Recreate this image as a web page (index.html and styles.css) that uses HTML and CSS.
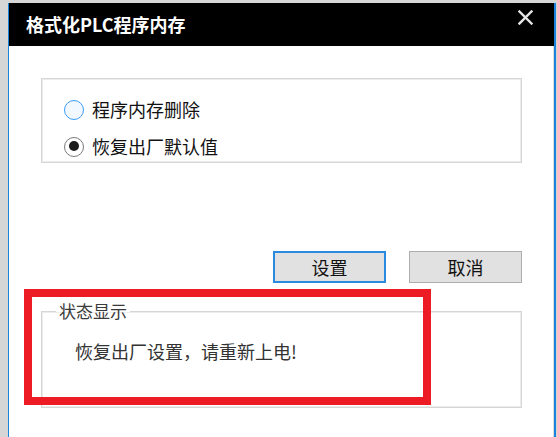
FILE: index.html
```html
<!DOCTYPE html>
<html lang="zh-CN">
<head>
<meta charset="utf-8">
<title>格式化PLC程序内存</title>
<link rel="stylesheet" href="styles.css">
</head>
<body>
<div class="window">
  <div class="titlebar">
    <span class="title">格式化PLC程序内存</span>
    <svg class="close" width="15" height="15" viewBox="0 0 15 15"><path d="M1.5 1.5 L13.5 13.5 M13.5 1.5 L1.5 13.5" stroke="#e6e6e6" stroke-width="2.4" stroke-linecap="square"/></svg>
  </div>
  <div class="content">
    <div class="group options">
      <label class="radio-row"><span class="radio hover"></span><span>程序内存删除</span></label>
      <label class="radio-row"><span class="radio checked"></span><span>恢复出厂默认值</span></label>
    </div>
    <div class="buttons">
      <button class="btn primary">设置</button>
      <button class="btn">取消</button>
    </div>
    <fieldset class="group status">
      <legend>状态显示</legend>
      <div class="status-text">恢复出厂设置，请重新上电!</div>
    </fieldset>
    <div class="highlight"></div>
  </div>
</div>
</body>
</html>
```

FILE: styles.css
```css
* { box-sizing: border-box; }
html, body {
  margin: 0;
  padding: 0;
  background: #d6d6d6;
  width: 557px;
  height: 437px;
  overflow: hidden;
  font-family: "Noto Sans CJK SC", "Microsoft YaHei", sans-serif;
}
.window {
  margin: 3px 0 0 8px;
  width: 548px;
  height: 434px;
  border-left: 1px solid #1a84dc;
  border-right: 2px solid #1a84dc;
  background: #fff;
  display: flex;
  flex-direction: column;
}
.titlebar {
  height: 43px;
  background: #000;
  display: flex;
  align-items: center;
  justify-content: space-between;
  padding: 0 21px 2px 17px;
  flex: none;
}
.title {
  color: #fff;
  font-weight: bold;
  font-size: 18px;
  line-height: 20px;
}
.close { display: block; margin-top: -12px; }
.content {
  position: relative;
  flex: 1;
  border-right: 1px solid #dcdcdc;
  padding: 32px 31px 0 32px;
  display: flex;
  flex-direction: column;
}
.group {
  border: 1px solid #d6d6d6;
  box-shadow: inset 0 0 0 1px #ececec;
}
.options {
  height: 85px;
  padding: 20px 0 0 22px;
  display: flex;
  flex-direction: column;
  gap: 16px;
}
.radio-row {
  display: flex;
  align-items: center;
  gap: 8px;
  font-size: 18px;
  line-height: 21px;
  color: #111;
}
.radio {
  width: 20px;
  height: 20px;
  border-radius: 50%;
  flex: none;
  position: relative;
}
.radio.hover {
  border: 1.5px solid #3c9cf8;
  background: #f1f8ff;
}
.radio.checked {
  border: 1.5px solid #7a7a7a;
  background: #fff;
}
.radio.checked::after {
  content: "";
  position: absolute;
  left: 3.5px;
  top: 3.5px;
  width: 10px;
  height: 10px;
  border-radius: 50%;
  background: #1b1b1b;
}
.buttons {
  margin-top: 88px;
  display: flex;
  justify-content: flex-end;
  gap: 23px;
}
.btn {
  width: 113px;
  height: 32px;
  background: #e1e1e1;
  border: 1px solid #adadad;
  font-family: inherit;
  font-size: 18px;
  line-height: 20px;
  color: #111;
  padding: 0;
}
.btn.primary {
  border: 2px solid #2a8ae0;
}
.status {
  margin: 18px 0 0 0;
  height: 107px;
  padding: 0;
  min-width: 0;
}
.status legend {
  margin-left: 14px;
  padding: 0 3px;
  font-size: 17px;
  line-height: 20px;
  color: #3a3a3a;
}
.status-text {
  margin-top: 19px;
  padding-left: 33px;
  font-size: 18px;
  line-height: 22px;
  color: #333;
}
.highlight {
  position: absolute;
  left: 15px;
  top: 243px;
  width: 407px;
  height: 116px;
  border: 8px solid #ed1c24;
  pointer-events: none;
}
```
